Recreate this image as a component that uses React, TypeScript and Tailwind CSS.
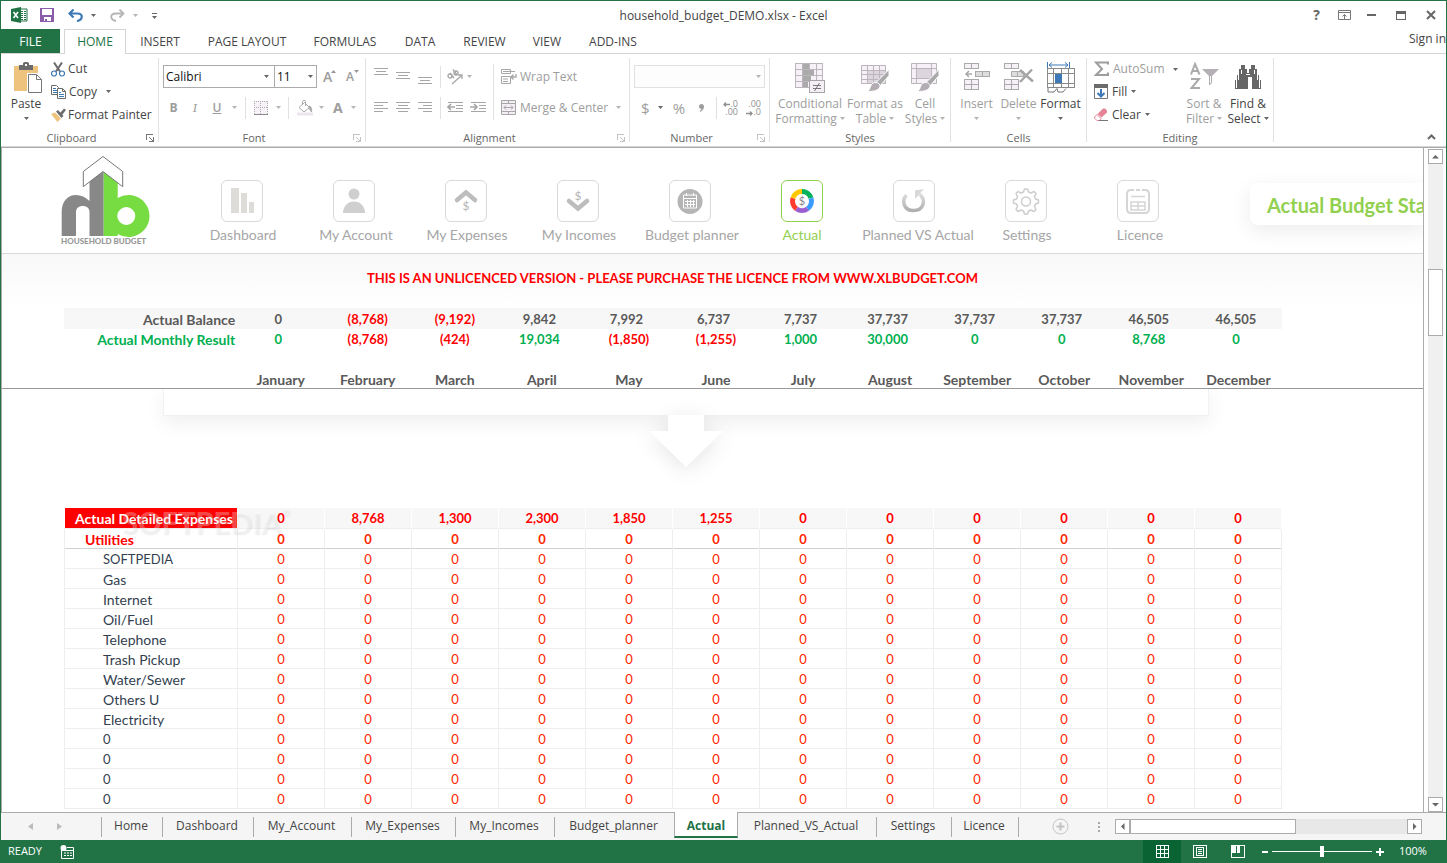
import type { ReactNode } from "react";

const RIBBON_TABS = [
  { name: "INSERT", width: "w-[68px]" },
  { name: "PAGE LAYOUT", width: "w-[106px]" },
  { name: "FORMULAS", width: "w-[90px]" },
  { name: "DATA", width: "w-[60px]" },
  { name: "REVIEW", width: "w-[69px]" },
  { name: "VIEW", width: "w-[56px]" },
  { name: "ADD-INS", width: "w-[76px]" },
];

const SHEETS = [
  { name: "Home", width: "w-[61px]" },
  { name: "Dashboard", width: "w-[91px]" },
  { name: "My_Account", width: "w-[98px]" },
  { name: "My_Expenses", width: "w-[104px]" },
  { name: "My_Incomes", width: "w-[99px]" },
  { name: "Budget_planner", width: "w-[119px]" },
  { name: "Actual", width: "w-[64px]", active: true },
  { name: "Planned_VS_Actual", width: "w-[139px]" },
  { name: "Settings", width: "w-[75px]" },
  { name: "Licence", width: "w-[67px]" },
];

const MONTHS = [
  "January",
  "February",
  "March",
  "April",
  "May",
  "June",
  "July",
  "August",
  "September",
  "October",
  "November",
  "December",
];

const BALANCE = ["0", "(8,768)", "(9,192)", "9,842", "7,992", "6,737", "7,737", "37,737", "37,737", "37,737", "46,505", "46,505"];
const RESULT = ["0", "(8,768)", "(424)", "19,034", "(1,850)", "(1,255)", "1,000", "30,000", "0", "0", "8,768", "0"];
const EXPENSES = ["0", "8,768", "1,300", "2,300", "1,850", "1,255", "0", "0", "0", "0", "0", "0"];

const ITEMS = [
  "SOFTPEDIA",
  "Gas",
  "Internet",
  "Oil/Fuel",
  "Telephone",
  "Trash Pickup",
  "Water/Sewer",
  "Others U",
  "Electricity",
  "0",
  "0",
  "0",
  "0",
];

/* ---------- small shared pieces ---------- */

const Caret = ({ dim = false }: { dim?: boolean }) => (
  <svg width="5" height="3" viewBox="0 0 5 3" className="shrink-0" aria-hidden="true">
    <path d="M0 0h5L2.500 3z" fill={dim ? "#b5b5b5" : "#666"} />
  </svg>
);

const Divider = ({ className = "h-[22px]" }: { className?: string }) => (
  <span className={`w-px shrink-0 bg-[#e1e1e1] ${className}`} />
);

const Group = ({
  label,
  width,
  launcher,
  dimLauncher = true,
  children,
}: {
  label: string;
  width: string;
  launcher?: boolean;
  dimLauncher?: boolean;
  children: ReactNode;
}) => (
  <section className={`flex h-[84px] shrink-0 flex-col border-r border-[#e1e1e1] ${width}`}>
    <div className="flex flex-1">{children}</div>
    <div className="flex h-[9px] items-center">
      <span className="flex-1 text-center text-[11px] leading-[13px] text-[#666]">{label}</span>
      {launcher && (
        <button aria-label={`${label} settings`} className="flex w-4 justify-end pr-1">
          <svg width="8" height="8" viewBox="0 0 8 8" fill="none" stroke={dimLauncher ? "#c3c3c3" : "#777"} shapeRendering="crispEdges">
            <path d="M.5 6V.5H7M7.500 3v4.500H3M3 3l4 4" />
          </svg>
        </button>
      )}
    </div>
  </section>
);

const BigButton = ({
  lines,
  width,
  icon,
  dim = true,
}: {
  lines: string[];
  width: string;
  icon: ReactNode;
  dim?: boolean;
}) => (
  <button className={`flex flex-col items-center pt-1 leading-[15px] ${width} ${dim ? "text-[#9d9d9d]" : "text-[#444]"}`}>
    <span className="flex h-[34px] items-start justify-center">{icon}</span>
    <span className="whitespace-nowrap">{lines[0]}</span>
    <span className="flex h-[15px] items-center gap-[3px] whitespace-nowrap">
      {lines[1]}
      <Caret dim={dim} />
    </span>
  </button>
);

/* ---------- ribbon icons ---------- */

const ExcelIcon = () => (
  <svg width="17" height="16" viewBox="0 0 17 16">
    <path d="M9 2h7v12H9z" fill="#fff" stroke="#217346" />
    <path d="M10 4.500h2M13 4.500h2M10 6.500h2M13 6.500h2M10 8.500h2M13 8.500h2M10 10.500h2M13 10.500h2M10 12.500h2M13 12.500h2" stroke="#217346" />
    <path d="M0 2l10-2v16L0 14z" fill="#217346" />
    <path d="M2.500 5l4.500 6M7 5l-4.500 6" stroke="#fff" strokeWidth="1.600" />
  </svg>
);

const SaveIcon = () => (
  <svg width="14" height="14" viewBox="0 0 14 14">
    <path d="M0 0h14v14H0z" fill="#8a5caa" />
    <path d="M2 1h10v6H2zM4 9h7v4H7v-2H5v2H4z" fill="#fff" />
  </svg>
);

const UndoIcon = ({ flip = false }: { flip?: boolean }) => (
  <svg width="15" height="13" viewBox="0 0 15 13" fill="none" stroke={flip ? "#b5b5b5" : "#3d79b5"} strokeWidth={flip ? 1.8 : 2.2}>
    <g transform={flip ? "matrix(-1 0 0 1 15 0)" : undefined}>
      <path d="M5.500 .5L1.500 4.500l4 4M2 4.500h7.500c6 0 5.500 6.500-.5 7.500" />
    </g>
  </svg>
);

const PasteIcon = () => (
  <svg width="28" height="31" viewBox="0 0 28 31">
    <path d="M0 4h24v25H0z" fill="#edc37d" />
    <path d="M5 3h4V1.500C9 .5 10 0 12 0s3 .5 3 1.500V3h4v5H5z" fill="#6b6b6b" />
    <path d="M11 2h2v2h-2z" fill="#fff" />
    <path d="M13 11h15v20H13z" fill="#fff" />
    <path d="M14.500 12.500h8l5 5v13h-13zM22.500 12.500v5h5" fill="#fff" stroke="#777" />
  </svg>
);

const CutIcon = () => (
  <svg width="14" height="15" viewBox="0 0 14 15" fill="none">
    <path d="M3 .5l6 9M11 .5l-6 9" stroke="#6b6b6b" strokeWidth="2" />
    <circle cx="3" cy="11.500" r="2.500" stroke="#3d79b5" strokeWidth="1.200" />
    <circle cx="11" cy="11.500" r="2.500" stroke="#3d79b5" strokeWidth="1.200" />
  </svg>
);

const CopyIcon = () => (
  <svg width="15" height="14" viewBox="0 0 15 14">
    <path d="M.5 .5h5l2 2v7h-7z" fill="#fff" stroke="#6b6b6b" />
    <path d="M2 3.500h3M2 5.500h4M2 7.500h4" stroke="#3d79b5" />
    <path d="M6.500 3.500h5l3 3v7h-8z" fill="#fff" stroke="#6b6b6b" />
    <path d="M11.500 3.500v3h3" fill="none" stroke="#6b6b6b" />
    <path d="M8 7.500h2M8 9.500h5M8 11.500h5" stroke="#3d79b5" />
  </svg>
);

const PainterIcon = () => (
  <svg width="15" height="14" viewBox="0 0 15 14">
    <path d="M0 6l4-1.500 6 6L6.500 14z" fill="#edc37d" />
    <path d="M5 3.500l2-1.500 5.500 6-2 2z" fill="#6b6b6b" />
    <path d="M9 5L13 .5l2 1.500-4 5z" fill="#6b6b6b" />
  </svg>
);

const FontSizeIcon = ({ up = false }: { up?: boolean }) => (
  <span className="relative flex h-[14px] w-[13px] items-end text-[#9d9d9d]">
    <span className={`leading-[14px] font-semibold ${up ? "text-sm" : "text-xs"}`}>A</span>
    <svg width="5" height="3" viewBox="0 0 5 3" className="absolute top-0 right-0">
      <path d={up ? "M0 3h5L2.500 0z" : "M0 0h5L2.500 3z"} fill="#999" />
    </svg>
  </span>
);

const BordersIcon = () => (
  <svg width="14" height="14" viewBox="0 0 14 14" fill="none" stroke="#b0a8b0" shapeRendering="crispEdges">
    <path d="M0 0h14v13H0z" fill="#f6f2f7" stroke="none" />
    <path d="M0 .5h14M0 6.500h14M.5 0v13M6.500 0v13M13.500 0v13" strokeDasharray="1 1" />
    <path d="M0 13.500h14" stroke="#888" />
  </svg>
);

const BucketIcon = () => (
  <svg width="16" height="16" viewBox="0 0 16 16" fill="none" stroke="#a9a9a9">
    <path d="M2 7.500L7.500 2.500l5 5-5.500 4.500zM5.500 5V1.500c0-1.500 3-1.500 3 0V6" />
    <path d="M12 6c2 .5 3 2 2.500 6-1-1-1.500-2.500-2.500-4z" fill="#a9a9a9" />
    <path d="M0 12.500h16v3H0z" fill="#ece6ec" stroke="none" />
  </svg>
);

// Stacked rules; `rows` gives [x1, x2, y] for each one
const Rules = ({ rows }: { rows: number[][] }) => (
  <svg width="14" height="18" viewBox="0 0 14 18" stroke="#a6a6a6" shapeRendering="crispEdges">
    {rows.map(([a, b, y]) => (
      <path key={y} d={`M${a} ${y}.5H${b}`} />
    ))}
  </svg>
);

const OrientIcon = () => (
  <svg width="16" height="16" viewBox="0 0 16 16" fill="none" stroke="#a6a6a6" strokeWidth="1.300">
    <circle cx="3" cy="7" r="2" />
    <path d="M3 4l4 5" />
    <path d="M6 .5l4 5.500" />
    <circle cx="9" cy="4" r="2" />
    <path d="M5 15L14.500 6.500M11 6h4v4" />
  </svg>
);

const IndentIcon = ({ out = false }: { out?: boolean }) => (
  <svg width="17" height="11" viewBox="0 0 17 11" fill="none" stroke="#a6a6a6" shapeRendering="crispEdges">
    <path d="M1 .5h15M9 3.500h7M9 6.500h7M1 9.500h15" />
    <path d={out ? "M1 5h7M4 2L1 5l3 3" : "M0 5h7M4 2l3 3-3 3"} strokeWidth="1.600" shapeRendering="auto" />
  </svg>
);

const WrapIcon = () => (
  <svg width="16" height="15" viewBox="0 0 16 15" fill="none" stroke="#a6a6a6">
    <path d="M.5 .5h9v4h-9zM.5 7.500h9v7h-9zM2 2.500h12M2 10h5M2 12.500h5" />
    <path d="M15 5v3h-4.500M12.500 5.500L10 8l2.500 2.500" strokeWidth="1.300" />
  </svg>
);

const MergeIcon = () => (
  <svg width="15" height="15" viewBox="0 0 15 15" fill="#f4eff5" stroke="#a6a6a6">
    <path d="M.5 .5h14v14H.5zM.5 3.500h14M.5 11.500h14M7.500 .5v3M7.500 11.500v3" />
    <path d="M3 7.500h9M5 5.500l-2 2 2 2M10 5.500l2 2-2 2" fill="none" />
  </svg>
);

const DecimalIcon = ({ more = false }: { more?: boolean }) => (
  <span className="relative flex h-[16px] w-[15px] flex-col text-[9px] leading-[8px] text-[#8f8f8f]">
    <span className="text-right">{more ? ".0" : ".00"}</span>
    <span className="text-right">{more ? ".00" : ".0"}</span>
    <svg
      width="7"
      height="5"
      viewBox="0 0 7 5"
      fill="none"
      stroke="#8f8f8f"
      strokeWidth="1.300"
      className={`absolute left-0 ${more ? "top-[2px]" : "bottom-0"}`}
    >
      <path d={more ? "M7 2.500H1M3 .5l-2 2 2 2" : "M0 2.500h6M4 .5l2 2-2 2"} />
    </svg>
  </span>
);

const ConditionalIcon = () => (
  <svg width="30" height="31" viewBox="0 0 30 31" stroke="#bdb5bd" shapeRendering="crispEdges">
    <path d="M.5 1.500h27v24H.5z" fill="#f6f0f7" />
    <path d="M.5 7.500h27M.5 13.500h27M.5 19.500h27M7.500 1.500v24M14.500 1.500v24M21.500 1.500v24" />
    <path d="M8 2h6v5H8zM8 8h11v5H8zM8 14h8v5H8zM8 20h5v5H8z" fill="#aaa" stroke="none" />
    <path d="M14.500 18.500h15v12h-15z" fill="#f4eef5" stroke="#a5a5a5" />
    <path d="M18 23.500h8M18 26.500h8" stroke="#777" />
    <path d="M24.500 21l-5 8" stroke="#777" shapeRendering="auto" />
  </svg>
);

const Brush = () => (
  <>
    <path d="M29 7.500v6L20 24l-4-3.500z" fill="#aaa" stroke="#fff" />
    <path d="M15.500 20.500c3 0 5 2 4.500 4-1 4-6 5-13 5 3-1.500 2.500-3 4-6 .8-2 2.500-3 4.500-3z" fill="#b3adb3" stroke="#fff" />
  </>
);

const TableStyleIcon = () => (
  <svg width="30" height="31" viewBox="0 0 30 31" stroke="#bdb5bd">
    <path d="M1.500 3.500h24v18h-24z" fill="#f6f0f7" />
    <path d="M7 8h18v13H7z" fill="#ddd7dd" stroke="none" />
    <path d="M1.500 8.500h24M1.500 12.500h24M1.500 17.500h24M7.500 3.500v18M13.500 3.500v18M19.500 3.500v18" fill="none" />
    <Brush />
  </svg>
);

const CellStyleIcon = () => (
  <svg width="30" height="31" viewBox="0 0 30 31" stroke="#bdb5bd">
    <path d="M1.500 1.500h25v20h-25z" fill="#f6f0f7" />
    <path d="M1.500 6.500h25M1.500 16.500h25M6.500 1.500v20M21.500 1.500v20" />
    <path d="M6.500 6.500h15v10h-15z" fill="#ddd5dd" />
    <Brush />
  </svg>
);

const InsertIcon = () => (
  <svg width="26" height="29" viewBox="0 0 26 29" fill="#f6f0f7" stroke="#aaa" shapeRendering="crispEdges">
    <path d="M.5 1.500h14v5H.5zM7.500 1.500v5M.5 17.500h14v10H.5zM7.500 17.500v10M.5 22.500h14" />
    <path d="M11.500 9.500h14v5h-14zM18.500 9.500v5" fill="#ddd" />
    <path d="M2 12h6M5 9l-3 3 3 3" fill="none" strokeWidth="1.500" shapeRendering="auto" />
  </svg>
);

const DeleteIcon = () => (
  <svg width="30" height="29" viewBox="0 0 30 29" fill="#f6f0f7" stroke="#aaa">
    <path d="M.5 1.500h14v5H.5zM7.500 1.500v5M.5 17.500h14v10H.5zM7.500 17.500v10M.5 22.500h14" shapeRendering="crispEdges" />
    <path d="M7.500 9.500h12v5h-12zM13.500 9.500v5" fill="#ddd" />
    <path d="M16 8l13 11.500M28 7.500L16 20" strokeWidth="2.500" stroke="#a5a5a5" />
  </svg>
);

const FormatIcon = () => (
  <svg width="29" height="31" viewBox="0 0 29 31" fill="none">
    <path d="M1.500 0v6M23.500 0v6M3 3h19M6 .5L3 3l3 2.500M19 .5L22 3l-3 2.500" stroke="#3d79b5" />
    <path d="M1.500 6.500h27v19h-27zM7.500 6.500v19M15.500 6.500v19M22.500 6.500v19M1.500 11.500h27M1.500 21.500h27" stroke="#8a8a8a" shapeRendering="crispEdges" />
    <path d="M9 12h7v9H9z" fill="#3d79b5" />
    <path d="M2 26v4h6l3-3.500 1 3.500h5l3-3.500" stroke="#777" fill="#fff" />
  </svg>
);

const SigmaIcon = () => (
  <svg width="15" height="16" viewBox="0 0 15 16" fill="none" stroke="#9d9d9d" strokeWidth="2">
    <path d="M14 3.500V1.500H2l6 6.500-6 6h12v-2.500" />
  </svg>
);

const FillIcon = () => (
  <svg width="14" height="15" viewBox="0 0 14 15" fill="none">
    <path d="M.5 .5h13v14H.5z" stroke="#777" />
    <path d="M0 0h14v4H0z" fill="#6b6b6b" />
    <path d="M7 5v7M3.500 9L7 12.500 10.500 9" stroke="#3d79b5" strokeWidth="2" />
  </svg>
);

const EraserIcon = () => (
  <svg width="14" height="13" viewBox="0 0 14 13">
    <path d="M3.500 6L9 .5h2l2 2v2L7.500 9.500z" fill="#e58497" />
    <path d="M3 6.500l4 4-1.500 2H3L.5 10V9z" fill="#fff" stroke="#e58497" />
    <path d="M5 12.500h9" stroke="#777" />
  </svg>
);

const SortIcon = () => (
  <svg width="29" height="29" viewBox="0 0 29 29" fill="none" stroke="#ababab">
    <path d="M1 12.500L5 2l4.500 10.500M2.500 9h6" strokeWidth="2" />
    <path d="M1 17h8L1.500 26h8.500" strokeWidth="2" />
    <path d="M12 7h17l-7 7v7l-3 2.500V14z" fill="#b5b0b5" stroke="none" />
    <path d="M19.500 13.500h2v7l-2 2z" fill="#fff" />
  </svg>
);

const FindIcon = () => (
  <svg width="26" height="27" viewBox="0 0 26 27" fill="#666">
    <path d="M6 3h4v4h2v4h2V7h2V3h4v4h2v6h2v5h2v9h-9V15h-4v12H0v-9h2v-5h2V7h2z" />
    <path d="M1.500 18v8M3.500 13v5M22.500 13v5M24.500 18v8M6.500 8v4M19.500 8v4" stroke="#fff" strokeWidth="1" />
    <path d="M11 12.500h4" stroke="#fff" />
  </svg>
);

/* ---------- workbook navigation icons ---------- */

const NavDollar = ({ y }: { y: number }) => (
  <text x="21" y={y} textAnchor="middle" fontSize="12" fontFamily="Lato, sans-serif" fill="#b5b5b5">
    $
  </text>
);

const NAV = [
  {
    label: "Dashboard",
    pad: "pl-0.5",
    icon: (
      <g fill="#dedcd8">
        <path d="M10 8h8v25h-8zM20 13h6v20h-6zM28 22h5v11h-5z" />
      </g>
    ),
  },
  {
    label: "My Account",
    pad: "pl-1",
    icon: (
      <g fill="#cfcfcf">
        <circle cx="21" cy="14" r="5.500" />
        <path d="M10 33c0-7 5-11.500 11-11.500S32 26 32 33z" />
      </g>
    ),
  },
  {
    label: "My Expenses",
    pad: "pl-0.5",
    icon: (
      <g>
        <path d="M12 20l9-7.500 9 7.500" fill="none" stroke="#bdbdbd" strokeWidth="4.500" strokeLinecap="round" />
        <NavDollar y={30} />
      </g>
    ),
  },
  {
    label: "My Incomes",
    pad: "pl-0.5",
    icon: (
      <g>
        <path d="M12 21l9 7.500 9-7.500" fill="none" stroke="#bdbdbd" strokeWidth="4.500" strokeLinecap="round" />
        <NavDollar y={20} />
      </g>
    ),
  },
  {
    label: "Budget planner",
    pad: "pl-1",
    icon: (
      <g>
        <circle cx="21" cy="21.500" r="12.500" fill="#b5b5b5" />
        <path d="M14.500 15h13v13h-13zM14.500 18.500h13M17.500 13v3M24.500 13v3" fill="none" stroke="#fff" />
        <path d="M16 21.500h10M16 24.500h10M18.500 20v7M21.500 20v7M24.500 20v7" stroke="#fff" />
      </g>
    ),
  },
  {
    label: "Actual",
    pad: "",
    active: true,
    icon: (
      <g fill="none" strokeWidth="5">
        <path d="M21 11.500a9.500 9.500 0 0 1 9 6.600" stroke="#00b25a" />
        <path d="M30 18.100a9.500 9.500 0 0 1-3.400 10.600" stroke="#3b9cff" />
        <path d="M26.600 28.700a9.500 9.500 0 0 1-11.200 0" stroke="#9a5fd0" />
        <path d="M15.400 28.700A9.500 9.500 0 0 1 12 18.100" stroke="#ff3b30" />
        <path d="M12 18.100a9.500 9.500 0 0 1 9-6.600" stroke="#ffc800" />
        <text x="21" y="25" textAnchor="middle" fontSize="11" fontFamily="Lato, sans-serif" fill="#888">
          $
        </text>
      </g>
    ),
  },
  {
    label: "Planned VS Actual",
    pad: "pl-2",
    icon: (
      <g>
        <defs>
          <linearGradient id="loop" x1="0" y1="0" x2="0" y2="1">
            <stop offset="0" stopColor="#dedede" />
            <stop offset="1" stopColor="#b0b0b0" />
          </linearGradient>
        </defs>
        <path d="M13.500 15C8 21 11 30.500 20.500 30.500S34 21 26.500 14" fill="none" stroke="url(#loop)" strokeWidth="3.500" />
        <path d="M22 19v-8.500L31 9z" fill="#d8d8d8" />
      </g>
    ),
  },
  {
    label: "Settings",
    pad: "pl-0.5",
    icon: (
      <g fill="none" stroke="#cdcdcd" strokeWidth="1.500" strokeLinejoin="round">
        <path d="M18.500 12l1-3h3l1 3 2.500 1 3-1.500 2 2-1.500 3 1 2.500 3 1v3l-3 1-1 2.500 1.500 3-2 2-3-1.500-2.500 1-1 3h-3l-1-3-2.500-1-3 1.500-2-2 1.500-3-1-2.500-3-1v-3l3-1 1-2.500-1.500-3 2-2 3 1.500z" />
        <circle cx="21" cy="21.500" r="4.500" />
      </g>
    ),
  },
  {
    label: "Licence",
    pad: "pl-1",
    icon: (
      <g fill="none" stroke="#d5d5d5" strokeWidth="2">
        <path d="M17 10h-3q-4 0-4 4v15q0 4 4 4h14q4 0 4-4V14q0-4-4-4h-3M19 10h4" />
        <path d="M14 16.500h14M14 22h14v8H14zM21 22v8M14 26h14" strokeWidth="1.500" />
      </g>
    ),
  },
];

const Logo = () => (
  <svg width="92" height="92" viewBox="0 0 92 92" role="img" aria-label="Household Budget">
    <path d="M1.700 82V58C1.700 47 8 41 16 41c5 0 9.500 2 13.500 6V26L43.700 17.500V82H29.500V58c0-4-3-6-6.700-6S16 54 16 58V82z" fill="#888" />
    <path
      d="M43.700 17.500L57.700 28v16A21 21 0 1 1 57.700 80V82h-14zM66.300 53a9 9 0 1 0 0 18 9 9 0 0 0 0-18z"
      fill="#76dc42"
      fillRule="evenodd"
    />
    <path d="M43 2.500l19.700 15v15.200L43 17.500 23.300 32.700V17.500z" fill="#fff" stroke="#777" />
    <text x="1" y="90" fontSize="8" fontWeight="900" fontFamily="Lato, sans-serif" fill="#999">
      HOUSEHOLD BUDGET
    </text>
  </svg>
);

/* ---------- page sections ---------- */

const TitleBar = () => (
  <header className="grid h-7 grid-cols-[1fr_auto_1fr] items-center">
    <div className="flex items-center pl-2.5">
      <ExcelIcon />
      <button aria-label="Save" className="ml-3">
        <SaveIcon />
      </button>
      <button aria-label="Undo" className="ml-3.5 flex items-center gap-2">
        <UndoIcon />
        <Caret />
      </button>
      <button aria-label="Redo" className="ml-3.5 flex items-center gap-2">
        <UndoIcon flip />
        <Caret dim />
      </button>
      <button aria-label="Customize toolbar" className="ml-3.5 flex flex-col items-center gap-0.5 pt-0.5">
        <span className="h-px w-[5px] bg-[#666]" />
        <Caret />
      </button>
    </div>
    <h1 className="pt-0.5 text-xs text-[#444]">household_budget_DEMO.xlsx - Excel</h1>
    <div className="flex items-center justify-end pr-2.5 text-[#666]">
      <button aria-label="Help" className="mr-[18px] text-sm leading-4 font-bold">
        ?
      </button>
      <button aria-label="Ribbon display options" className="mr-4">
        <svg width="13" height="10" viewBox="0 0 13 10" fill="none" stroke="#777">
          <path d="M.5 .5h12v9H.5zM.5 2.500h12M6.500 9V4.500M4.500 6.500l2-2 2 2" />
        </svg>
      </button>
      <button aria-label="Minimize" className="mr-5 h-[2px] w-[9px] bg-[#666]" />
      <button aria-label="Restore" className="mr-5 h-[9px] w-[10px] border border-t-[3px] border-[#666]" />
      <button aria-label="Close">
        <svg width="10" height="10" viewBox="0 0 10 10" stroke="#666" strokeWidth="2">
          <path d="M1 1l8 8M9 1L1 9" />
        </svg>
      </button>
    </div>
  </header>
);

const RibbonTabs = () => (
  <nav className="flex h-[25px] border-b border-[#d5d5d5] text-xs text-[#444]">
    <button className="h-6 w-[59px] bg-[#217346] pt-px text-white">FILE</button>
    <button className="ml-1 h-[25px] w-[62px] border border-b-0 border-[#d5d5d5] bg-white text-[#217346]">HOME</button>
    {RIBBON_TABS.map((tab) => (
      <button key={tab.name} className={`pt-0.5 whitespace-nowrap ${tab.width}`}>
        {tab.name}
      </button>
    ))}
    <button className="ml-auto h-5 whitespace-nowrap">Sign in</button>
  </nav>
);

const Ribbon = () => (
  <div className="relative flex h-[93px] overflow-hidden border-b border-[#d5d5d5] py-1 text-xs text-[#444]">
    <Group label="Clipboard" width="w-[158px]" launcher dimLauncher={false}>
      <button className="flex w-[50px] flex-col items-center pt-1 leading-[15px]">
        <span className="h-[34px] pl-1">
          <PasteIcon />
        </span>
        Paste
        <span className="flex h-[15px] items-center">
          <Caret />
        </span>
      </button>
      <div className="flex flex-col">
        <button className="flex h-[22px] items-center gap-[3px]">
          <CutIcon />
          Cut
        </button>
        <button className="flex h-[23px] items-center gap-[3px]">
          <CopyIcon />
          Copy
          <span className="pl-1.5">
            <Caret />
          </span>
        </button>
        <button className="flex h-[23px] items-center gap-0.5 whitespace-nowrap">
          <PainterIcon />
          Format Painter
        </button>
      </div>
    </Group>

    <Group label="Font" width="w-[207px]" launcher>
      <div className="flex flex-col gap-2 pt-[7px] pl-1">
        <div className="flex items-center">
          <div className="relative">
            <select aria-label="Font" className="h-[23px] w-28 appearance-none border border-[#ababab] px-0.5 text-[#111]">
              <option>Calibri</option>
            </select>
            <span className="pointer-events-none absolute top-2.5 right-1.5">
              <Caret />
            </span>
          </div>
          <div className="relative">
            <select aria-label="Font size" className="h-[23px] w-[42px] appearance-none border border-l-0 border-[#ababab] px-0.5 text-[#111]">
              <option>11</option>
            </select>
            <span className="pointer-events-none absolute top-2.5 right-1">
              <Caret />
            </span>
          </div>
          <button aria-label="Increase font size" className="ml-1.5">
            <FontSizeIcon up />
          </button>
          <button aria-label="Decrease font size" className="ml-2.5">
            <FontSizeIcon />
          </button>
        </div>
        <div className="flex h-[23px] items-center text-[#9d9d9d]">
          <button className="w-[21px] font-bold">B</button>
          <button className="w-[22px] font-serif text-[13px] italic">I</button>
          <button className="w-[22px] font-semibold underline">U</button>
          <span className="flex w-[17px] justify-center pr-1">
            <Caret dim />
          </span>
          <Divider />
          <button aria-label="Borders" className="flex w-[42px] items-center gap-2 pl-2">
            <BordersIcon />
            <Caret dim />
          </button>
          <Divider />
          <button aria-label="Fill color" className="flex w-9 items-center gap-1.5 pl-2">
            <BucketIcon />
            <Caret dim />
          </button>
          <button aria-label="Font color" className="ml-2 flex items-center gap-2 text-sm leading-4 font-bold">
            A
            <Caret dim />
          </button>
        </div>
      </div>
    </Group>

    <Group label="Alignment" width="w-[264px]" launcher>
      <div className="flex flex-col gap-2 pt-[7px] pl-2">
        <div className="flex h-[23px] items-center">
          <div className="flex w-[66px] gap-2">
            <button aria-label="Top align">
              <Rules rows={[[0, 14, 0], [2, 12, 3], [0, 14, 6]]} />
            </button>
            <button aria-label="Middle align">
              <Rules rows={[[0, 14, 4], [2, 12, 7], [0, 14, 10]]} />
            </button>
            <button aria-label="Bottom align">
              <Rules rows={[[0, 14, 9], [2, 12, 12], [0, 14, 15]]} />
            </button>
          </div>
          <Divider />
          <button aria-label="Orientation" className="flex items-center gap-1 pl-1.5">
            <OrientIcon />
            <Caret dim />
          </button>
        </div>
        <div className="flex h-[23px] items-center">
          <div className="flex w-[66px] gap-2">
            <button aria-label="Align left">
              <Rules rows={[[0, 14, 3], [0, 9, 6], [0, 14, 9], [0, 9, 12]]} />
            </button>
            <button aria-label="Center">
              <Rules rows={[[0, 14, 3], [2, 12, 6], [0, 14, 9], [2, 12, 12]]} />
            </button>
            <button aria-label="Align right">
              <Rules rows={[[0, 14, 3], [5, 14, 6], [0, 14, 9], [5, 14, 12]]} />
            </button>
          </div>
          <Divider />
          <button aria-label="Decrease indent" className="pl-1.5">
            <IndentIcon out />
          </button>
          <button aria-label="Increase indent" className="pl-1.5">
            <IndentIcon />
          </button>
        </div>
      </div>
      <Divider className="mt-1.5 ml-1.5 h-[56px]" />
      <div className="flex flex-col gap-2 pt-[7px] pl-[7px] text-[#9d9d9d]">
        <button className="flex h-[23px] items-center gap-[3px] whitespace-nowrap">
          <WrapIcon />
          Wrap Text
        </button>
        <button className="flex h-[23px] items-center gap-1 whitespace-nowrap">
          <MergeIcon />
          Merge &amp; Center
          <span className="pl-1">
            <Caret dim />
          </span>
        </button>
      </div>
    </Group>

    <Group label="Number" width="w-[140px]" launcher>
      <div className="flex flex-col gap-2 pt-[7px] pl-1">
        <div className="relative">
          <select aria-label="Number format" disabled className="block h-[23px] w-[131px] appearance-none border border-[#e1e1e1] bg-[#fdfdfd]">
            <option />
          </select>
          <span className="pointer-events-none absolute top-2.5 right-1">
            <Caret dim />
          </span>
        </div>
        <div className="flex h-[23px] items-center text-[15px] text-[#9d9d9d]">
          <button aria-label="Accounting format" className="flex w-8 items-center gap-2 pl-[7px]">
            $
            <Caret />
          </button>
          <button className="w-[26px]">%</button>
          <button aria-label="Comma style" className="flex w-[18px] justify-center">
            <svg width="5" height="8" viewBox="0 0 5 8" fill="#9d9d9d">
              <path d="M2.500 0C4 0 5 1 5 2.500 5 5 3.500 7 1 8l-.5-1C2 6.500 2.500 5.500 2.500 5 1 5 0 4 0 2.500S1 0 2.500 0z" />
            </svg>
          </button>
          <Divider className="ml-1.5 h-[22px]" />
          <button aria-label="Increase decimal" className="pl-1.5">
            <DecimalIcon more />
          </button>
          <button aria-label="Decrease decimal" className="pl-2">
            <DecimalIcon />
          </button>
        </div>
      </div>
    </Group>

    <Group label="Styles" width="w-[181px]">
      <div className="flex flex-1 justify-center">
        <BigButton lines={["Conditional", "Formatting"]} width="w-[76px]" icon={<ConditionalIcon />} />
        <BigButton lines={["Format as", "Table"]} width="w-[54px]" icon={<TableStyleIcon />} />
        <BigButton lines={["Cell", "Styles"]} width="w-[46px]" icon={<CellStyleIcon />} />
      </div>
    </Group>

    <Group label="Cells" width="w-[136px]">
      <div className="flex flex-1 justify-center">
        <BigButton lines={["Insert", ""]} width="w-[42px]" icon={<InsertIcon />} />
        <BigButton lines={["Delete", ""]} width="w-[42px]" icon={<DeleteIcon />} />
        <BigButton lines={["Format", ""]} width="w-[42px]" icon={<FormatIcon />} dim={false} />
      </div>
    </Group>

    <Group label="Editing" width="w-[187px]">
      <div className="flex w-[95px] flex-col pl-[7px]">
        <button className="flex h-[22px] items-center gap-1 text-[#9d9d9d]">
          <SigmaIcon />
          AutoSum
          <span className="ml-auto pr-1">
            <Caret />
          </span>
        </button>
        <button className="flex h-[23px] items-center gap-1">
          <FillIcon />
          Fill
          <Caret />
        </button>
        <button className="flex h-[23px] items-center gap-1">
          <EraserIcon />
          Clear
          <Caret />
        </button>
      </div>
      <BigButton lines={["Sort &", "Filter"]} width="w-[44px]" icon={<SortIcon />} />
      <BigButton lines={["Find &", "Select"]} width="w-[44px]" icon={<FindIcon />} dim={false} />
    </Group>

    <button aria-label="Collapse the ribbon" className="mt-auto mr-2.5 mb-0.5 ml-auto">
      <svg width="9" height="6" viewBox="0 0 9 6" fill="none" stroke="#666" strokeWidth="2">
        <path d="M1 5l3.500-3.500L8 5" />
      </svg>
    </button>
  </div>
);

const WorkbookNav = () => (
  <nav className="flex h-[106px] shrink-0 border-b border-[#d9d9d9] bg-white">
    <div className="w-[184px] shrink-0 pt-1.5 pl-[58px]">
      <Logo />
    </div>
    {NAV.map((item) => (
      <a key={item.label} href="#" className="flex w-28 shrink-0 flex-col items-center pt-8">
        <span className={`h-[42px] w-[42px] rounded-md border ${item.active ? "border-[#92d050]" : "border-[#d9d9d9]"}`}>
          <svg width="40" height="40" viewBox="1 1 40 40" aria-hidden="true">
            {item.icon}
          </svg>
        </span>
        <span className={`mt-1 text-sm leading-[18px] whitespace-nowrap ${item.pad} ${item.active ? "text-[#92d050]" : "text-[#a6a6a6]"}`}>
          {item.label}
        </span>
      </a>
    ))}
    <div className="mt-[35px] ml-14 h-[42px] flex-1 rounded-l-lg bg-white pl-[17px] text-xl leading-[44px] font-bold whitespace-nowrap text-[#92d050] shadow-[0_6px_20px_rgba(0,0,0,0.08)]">
      Actual Budget Sta
    </div>
  </nav>
);

const SummaryRow = ({ label, values, color, row }: { label: string; values: string[]; color: string; row: string }) => (
  <tr className={row}>
    <th scope="row" className={`pr-0.5 text-right text-sm leading-[19px] ${color}`}>
      {label}
    </th>
    {values.map((value, i) => {
      const negative = value.startsWith("(");
      return (
        <td key={MONTHS[i]} className={negative ? "text-[#ff0000]" : `pr-[5px] ${color}`}>
          {value}
        </td>
      );
    })}
  </tr>
);

const Columns = () => (
  <colgroup>
    <col className="w-[173px]" />
    {MONTHS.map((month) => (
      <col key={month} className="w-[87px]" />
    ))}
  </colgroup>
);

const FrozenPane = () => (
  <div className="shrink-0 overflow-hidden border-b border-[#999]">
    <WorkbookNav />
    <div className="h-[54px] bg-linear-to-b from-[#f8f8f8] to-white">
      <p className="ml-[62px] w-[1217px] pt-3.5 text-center text-[13px] leading-5 font-bold text-[#ff0000]">
        THIS IS AN UNLICENCED VERSION - PLEASE PURCHASE THE LICENCE FROM WWW.XLBUDGET.COM
      </p>
    </div>
    <table className="ml-[62px] w-[1218px] table-fixed text-center text-[13px] leading-[19px] font-bold text-[#595959]">
      <Columns />
      <tbody>
        <SummaryRow label="Actual Balance" values={BALANCE} color="text-[#595959]" row="h-[21px] bg-[#f7f7f7] align-bottom" />
        <SummaryRow label="Actual Monthly Result" values={RESULT} color="text-[#00b050]" row="h-5" />
        <tr className="h-[39px] align-bottom text-sm leading-[17px]">
          <td />
          {MONTHS.map((month) => (
            <th key={month} scope="col">
              {month}
            </th>
          ))}
        </tr>
      </tbody>
    </table>
  </div>
);

const ScrollingPane = () => (
  <div className="relative min-h-0 flex-1 overflow-hidden">
    <div className="h-[119px]">
      <div className="ml-[161px] h-[27px] w-[1046px] border border-t-0 border-[#f2f2f2] bg-white shadow-[0_6px_20px_rgba(0,0,0,0.07)]" />
      <svg
        width="76"
        height="54"
        viewBox="0 0 76 54"
        className="relative -mt-px ml-[646px] drop-shadow-[0_4px_10px_rgba(0,0,0,0.1)]"
        aria-hidden="true"
      >
        <path d="M20 0H56V16H75L38 52 1 16H20z" fill="#fff" />
      </svg>
    </div>
    <table className="ml-[62px] w-[1218px] table-fixed border-collapse text-center text-[13px] leading-[17px] text-[#ff2600] [&_td]:pt-0.5 [&_th]:pt-0.5">
      <Columns />
      <thead>
        <tr className="h-5 border-b border-[#eee] bg-[#f7f7f7] text-[#ff0000]">
          <th scope="row" className="bg-[#ff0000] pr-1 text-right text-sm leading-[17px] whitespace-nowrap text-white">
            Actual Detailed Expenses
          </th>
          {EXPENSES.map((value, i) => (
            <th key={MONTHS[i]} className="border-x border-white">
              {value}
            </th>
          ))}
        </tr>
        <tr className="h-5 border-b border-[#d0d0d0]">
          <th scope="row" className="border-x border-[#eee] pl-5 text-left text-sm leading-[17px] text-[#ff0000]">
            Utilities
          </th>
          {MONTHS.map((month) => (
            <th key={month} className="border-x border-[#eee]">
              0
            </th>
          ))}
        </tr>
      </thead>
      <tbody>
        {ITEMS.map((item, i) => (
          <tr key={i} className="h-5 border-b border-[#eee]">
            <th
              scope="row"
              className={`border-x border-[#eee] pl-[38px] text-left leading-[17px] font-normal text-[#333f4f] ${
                item === "SOFTPEDIA" || item === "0" ? "text-[13px]" : "text-sm"
              }`}
            >
              {item}
            </th>
            {MONTHS.map((month) => (
              <td key={month} className="border-x border-[#eee]">
                0
              </td>
            ))}
          </tr>
        ))}
      </tbody>
    </table>
    <div className="pointer-events-none absolute top-[116px] left-[120px] flex items-start text-[29px] leading-[34px] font-black text-white/30 [text-shadow:1px_2px_2px_rgba(0,0,0,0.08)]">
      SOFTPEDIA<span className="text-[10px] leading-3">®</span>
    </div>
  </div>
);

const Arrow = ({ d }: { d: string }) => (
  <svg width="7" height="7" viewBox="0 0 7 7" aria-hidden="true">
    <path d={d} fill="#666" />
  </svg>
);

const VerticalScroll = () => (
  <div className="flex w-[23px] shrink-0 flex-col border-l border-[#ababab] pt-px pr-1 pl-1">
    <button aria-label="Scroll up" className="flex h-[15px] w-[15px] items-center justify-center border border-[#ababab]">
      <Arrow d="M0 5.500h7L3.500 2z" />
    </button>
    <div className="w-[15px] flex-1 bg-[#f0f0f0] pt-[105px]">
      <div className="h-[67px] border border-[#ababab] bg-white" />
    </div>
    <button aria-label="Scroll down" className="flex h-[15px] w-[15px] items-center justify-center border border-[#ababab]">
      <Arrow d="M0 2h7L3.500 5.500z" />
    </button>
  </div>
);

const SheetTabs = () => (
  <div className="flex h-7 shrink-0 items-center border-t border-[#ababab] bg-[#f5f5f5] text-xs text-[#444]">
    <div className="flex w-[101px] shrink-0 items-center gap-6 pl-[27px]">
      <button aria-label="Previous sheet">
        <svg width="5" height="7" viewBox="0 0 5 7">
          <path d="M5 0v7L0 3.500z" fill="#bbb" />
        </svg>
      </button>
      <button aria-label="Next sheet">
        <svg width="5" height="7" viewBox="0 0 5 7">
          <path d="M0 0v7l5-3.500z" fill="#bbb" />
        </svg>
      </button>
    </div>
    <span className="-ml-px h-5 w-px bg-[#ababab]" />
    {SHEETS.map((sheet) =>
      sheet.active ? (
        <button
          key={sheet.name}
          className={`-mt-1 h-[26px] shrink-0 border-x border-b-2 border-x-[#ababab] border-b-[#217346] bg-white pt-1 font-bold text-[#217346] ${sheet.width}`}
        >
          {sheet.name}
        </button>
      ) : (
        <button
          key={sheet.name}
          className={`h-5 shrink-0 pr-0.5 pb-0.5 whitespace-nowrap ${sheet.name === "Budget_planner" ? "" : "border-r border-[#ababab]"} ${sheet.width}`}
        >
          {sheet.name}
        </button>
      )
    )}
    <button aria-label="New sheet" className="ml-[33px]">
      <svg width="17" height="17" viewBox="0 0 17 17" fill="none" stroke="#c3c3c3">
        <circle cx="8.500" cy="8.500" r="7.500" />
        <path d="M8.500 4.500v8M4.500 8.500h8" strokeWidth="2" />
      </svg>
    </button>
    <svg width="2" height="10" viewBox="0 0 2 10" className="ml-auto shrink-0" fill="#aaa" aria-hidden="true">
      <path d="M0 0h2v2H0zM0 4h2v2H0zM0 8h2v2H0z" />
    </svg>
    <div className="mr-6 ml-[15px] flex h-[15px] w-[307px] shrink-0 bg-[#e8e8e8]">
      <button aria-label="Scroll left" className="flex w-[15px] items-center justify-center border border-[#ababab] bg-white">
        <Arrow d="M5.500 0v7L2 3.500z" />
      </button>
      <div className="w-[166px] border border-[#ababab] bg-white" />
      <button aria-label="Scroll right" className="ml-auto flex w-[15px] items-center justify-center border border-[#ababab] bg-white">
        <Arrow d="M2 0v7l3.500-3.500z" />
      </button>
    </div>
  </div>
);

const StatusBar = () => (
  <footer className="flex h-[23px] shrink-0 items-center bg-[#217346] text-[11px] text-white">
    <span className="pl-2">READY</span>
    <button aria-label="Record macro" className="ml-[18px]">
      <svg width="14" height="14" viewBox="0 0 14 14" fill="none" stroke="#fff">
        <path d="M1.500 5v8.500h12v-11H7M1.500 5.500h12M4 8h2M7 8h2M10 8h2M4 10.500h2M7 10.500h2M10 10.500h2" />
        <circle cx="3.500" cy="3" r="3" fill="#fff" stroke="none" />
      </svg>
    </button>
    <div className="ml-auto flex h-full items-center">
      <button aria-label="Normal view" className="flex h-full w-[38px] items-center justify-center bg-[#0a6332]">
        <svg width="13" height="13" viewBox="0 0 13 13" fill="none" stroke="#fff" shapeRendering="crispEdges">
          <path d="M.5 .5h12v12H.5zM4.500 .5v12M8.500 .5v12M.5 4.500h12M.5 8.500h12" />
        </svg>
      </button>
      <button aria-label="Page layout view" className="flex w-[38px] justify-center">
        <svg width="14" height="13" viewBox="0 0 14 13" fill="none" stroke="#fff" shapeRendering="crispEdges">
          <path d="M.5 .5h13v12H.5zM3.500 2.500h7v8h-7zM5 4.500h4M5 6.500h4M5 8.500h4" />
        </svg>
      </button>
      <button aria-label="Page break preview" className="flex w-[38px] justify-center">
        <svg width="14" height="13" viewBox="0 0 14 13" fill="none" stroke="#fff" shapeRendering="crispEdges">
          <path d="M.5 .5h13v12H.5z" />
          <path d="M1 1h4v7H1zM6 1h3v7H6z" fill="#fff" stroke="none" />
        </svg>
      </button>
      <button aria-label="Zoom out" className="ml-[5px] h-[2px] w-1.5 bg-white" />
      <input
        type="range"
        aria-label="Zoom"
        min="10"
        max="190"
        defaultValue="100"
        className="mx-1 h-[11px] w-[100px] appearance-none bg-transparent [&::-webkit-slider-runnable-track]:h-px [&::-webkit-slider-runnable-track]:bg-white [&::-webkit-slider-thumb]:-mt-[5px] [&::-webkit-slider-thumb]:h-[11px] [&::-webkit-slider-thumb]:w-1 [&::-webkit-slider-thumb]:appearance-none [&::-webkit-slider-thumb]:bg-white"
      />
      <button aria-label="Zoom in">
        <svg width="8" height="8" viewBox="0 0 8 8" stroke="#fff" strokeWidth="2">
          <path d="M4 0v8M0 4h8" />
        </svg>
      </button>
      <button className="w-[63px] pl-[15px] text-left">100%</button>
    </div>
  </footer>
);

const App = () => {
  return (
    <div className="flex h-screen flex-col overflow-hidden bg-white font-['Open_Sans','Liberation_Sans',sans-serif]">
      <div className="flex min-h-0 flex-1 flex-col border-x border-t border-[#217346]">
        <TitleBar />
        <RibbonTabs />
        <Ribbon />
        <main className="flex min-h-0 flex-1 border-t border-[#ababab]">
          <div className="flex min-w-0 flex-1 flex-col overflow-hidden border-l border-[#ababab] font-['Lato','Open_Sans',sans-serif]">
            <FrozenPane />
            <ScrollingPane />
          </div>
          <VerticalScroll />
        </main>
        <SheetTabs />
      </div>
      <StatusBar />
    </div>
  );
};

export default App;
